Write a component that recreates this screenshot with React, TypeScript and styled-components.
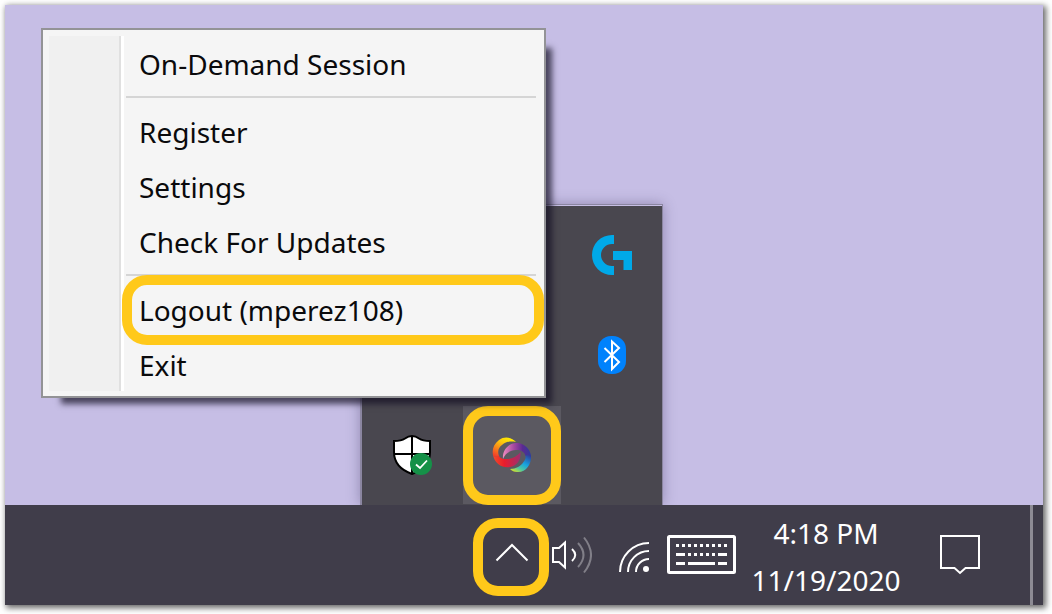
import React from "react";
import styled, { createGlobalStyle, css } from "styled-components";

const GlobalStyle = createGlobalStyle`
  *, *::before, *::after { box-sizing: border-box; }
  body {
    margin: 0;
    background: #fff;
    font-family: "Noto Sans", "Open Sans", "Segoe UI", sans-serif;
  }
  button { font: inherit; color: inherit; background: none; border: 0; padding: 0; }
  ul { list-style: none; margin: 0; padding: 0; }
`;

const ring = css`
  content: "";
  position: absolute;
  border: 10px solid #ffc91a;
  pointer-events: none;
`;

const Page = styled.main`
  display: flex;
  min-height: 100vh;
  padding: 5px 9px 9px 5px;
`;

const Desktop = styled.div`
  flex: 1;
  display: flex;
  flex-direction: column;
  min-width: 0;
  background: #c6bee5;
  box-shadow: 2px 2px 6px 1px rgba(0, 0, 0, 0.6);
`;

const Wallpaper = styled.section`
  position: relative;
  flex: 1;
  min-height: 480px;
`;

const TrayPanel = styled.div`
  position: absolute;
  right: 380px;
  bottom: 0;
  display: grid;
  grid-template-columns: repeat(3, 100px);
  grid-auto-rows: 100px;
  background: #49474f;
  border: solid #8b86a1;
  border-width: 1px 1px 0 2px;
  box-shadow: 0 0 12px rgba(50, 40, 80, 0.35), inset 0 1px 0 #c6bee5;
  clip-path: inset(-20px -20px 0 -20px);
`;

const TrayCell = styled.button<{ $active?: boolean }>`
  position: relative;
  display: flex;
  align-items: center;
  justify-content: center;

  ${(p) =>
    p.$active &&
    css`
      margin: 1px;
      background: #5b5961;
      &::after {
        ${ring}
        inset: 0 0 -1px;
        border-radius: 25px;
      }
    `}
`;

const Menu = styled.div`
  position: absolute;
  right: 497px;
  bottom: 107px;
  width: 505px;
  display: flex;
  padding: 0 0 0 6px;
  background: #f5f5f5;
  border: 2px solid #939396;
  box-shadow: 13px 13px 6px -7px rgba(20, 15, 35, 0.7);
`;

const Gutter = styled.div`
  width: 75px;
  margin: 6px 0 5px;
  background: #f0f0f0;
  border-right: 3px solid #fff;
  box-shadow: inset -2px 0 0 #e0e0e0;
`;

const MenuList = styled.ul`
  flex: 1;
  padding: 6px 0 4px 2px;
`;

const MenuRow = styled.li`
  position: relative;
`;

const MenuItem = styled.button<{ $marked?: boolean }>`
  display: block;
  width: 100%;
  height: 55px;
  padding: 0 13px;
  text-align: left;
  font-size: 28px;
  line-height: 56px;
  color: #0a0a0c;
  white-space: nowrap;

  ${(p) =>
    p.$marked &&
    css`
      &::after {
        ${ring}
        inset: -7px 0 -8px -4px;
        border-radius: 25px;
      }
    `}
`;

const Separator = styled.li`
  height: 2px;
  margin: 5px 8px 6px 0;
  background: #d5d5d5;
`;

const Taskbar = styled.footer`
  display: flex;
  justify-content: flex-end;
  height: 100px;
  background: #403d4a;
  color: #fff;
`;

const TaskButton = styled.button<{ $width: number }>`
  position: relative;
  display: flex;
  align-items: center;
  justify-content: center;
  width: ${(p) => p.$width}px;
`;

const ChevronButton = styled(TaskButton)`
  &::after {
    ${ring}
    inset: 13px 0 9px;
    border-radius: 25px;
  }
`;

const Clock = styled(TaskButton)`
  flex-direction: column;
  padding-top: 3px;
  font-size: 28px;
  line-height: 47px;
`;

const ShowDesktop = styled.button`
  width: 13px;
  margin-left: 24px;
  border-left: 3px solid #8d8b94;
`;

const LogitechIcon = () => (
  <svg width="40" height="40" viewBox="0 0 40 40" fill="#00a9e8">
    <path d="M22 0H20A20 20 0 0 0 20 40H22V31H20A11 11 0 0 1 20 9H22Z" />
    <path d="M21 16H40V35H31.500V25H21Z" />
  </svg>
);

const BluetoothIcon = () => (
  <svg width="28" height="38" viewBox="0 0 28 38">
    <rect width="28" height="38" rx="13" fill="#0082fc" />
    <path d="M6.500 12L21 26L14 33V5.500L21 12L6.500 26" fill="none" stroke="#fff" strokeWidth="2" />
  </svg>
);

const ShieldIcon = () => (
  <svg width="40" height="40" viewBox="0 0 40 40">
    <path
      d="M20 1C17 1 15 2 13 3.500C10 5.500 6 6 2 6V17C2 28 9 35 20 39C31 35 38 28 38 17V6C34 6 30 5.500 27 3.500C25 2 23 1 20 1Z"
      fill="#fff"
      stroke="#000"
      strokeWidth="2"
    />
    <path d="M20 1V39M2 19H38" stroke="#000" strokeWidth="2" />
    <circle cx="29" cy="29" r="11" fill="#159148" />
    <path d="M24 29.500L28 33L35 25.500" fill="none" stroke="#fff" strokeWidth="1.800" />
  </svg>
);

const SwirlIcon = () => (
  <svg width="40" height="40" viewBox="0 0 40 40">
    <defs>
      <linearGradient id="warm" x1="0.800" y1="0" x2="0.200" y2="1">
        <stop offset="0" stopColor="#fff200" />
        <stop offset="0.350" stopColor="#fdc70c" />
        <stop offset="1" stopColor="#f0402a" />
      </linearGradient>
      <linearGradient id="red" x1="0" x2="1" y1="0" y2="0">
        <stop offset="0" stopColor="#f04a28" />
        <stop offset="0.400" stopColor="#ea1c2c" />
        <stop offset="1" stopColor="#9c2f72" />
      </linearGradient>
      <linearGradient id="violet" x1="0" x2="1" y1="0" y2="0">
        <stop offset="0" stopColor="#f08cc0" />
        <stop offset="0.400" stopColor="#a3479f" />
        <stop offset="0.700" stopColor="#5b2a91" />
        <stop offset="1" stopColor="#2f3c9c" />
      </linearGradient>
      <linearGradient id="cool" x1="0.900" y1="0" x2="0.200" y2="1">
        <stop offset="0" stopColor="#2f3c9c" />
        <stop offset="0.450" stopColor="#16a3e0" />
        <stop offset="0.750" stopColor="#4fc9a0" />
        <stop offset="1" stopColor="#d4e02a" />
      </linearGradient>
    </defs>
    <path d="M24 7C20 2 12 1 7 5C1 9.500 -0.500 16 1.500 22L7 21C5 16 7 12 10 10C14 6.500 19 6 24 7Z" fill="url(#warm)" />
    <path d="M1.500 22C4 30 12 34 20 31.500C26 29.500 29 24 28.500 17C26 20.500 21 23.500 16 24C11.500 24.500 8 23.500 6.700 20.500Z" fill="url(#red)" />
    <path d="M11 24C10 14 18 7 26 8C33 9 38 14 39 20.500L33.500 21C32.500 17 29 14.500 24 15C18 15.500 13.500 18 11 24Z" fill="url(#violet)" />
    <path d="M39 20C40 30 33 38 25 37C22 37 20 36 18 34C24 34 29 31 31.500 27C33.500 24.500 34 23 33.300 20.500Z" fill="url(#cool)" />
  </svg>
);

const ChevronIcon = () => (
  <svg width="40" height="40" viewBox="0 0 40 40" fill="none" stroke="#fff" strokeWidth="2">
    <path d="M5.500 25.500L21 10L36.500 25.500" />
  </svg>
);

const VolumeIcon = () => (
  <svg width="40" height="40" viewBox="0 0 40 40" fill="none" stroke="#fff" strokeWidth="2">
    <path d="M1 13H7L13 7.500V32.500L7 27H1Z" />
    <path d="M20 14Q26.500 20 20 26" />
    <path d="M26 8Q37 20 26 32" stroke="#817f88" />
    <path d="M32 2.500Q46 20 32 37.500" stroke="#817f88" />
  </svg>
);

const WifiIcon = () => (
  <svg width="40" height="40" viewBox="0 0 40 40" fill="none" stroke="#fff" strokeWidth="2">
    <path d="M10 37A29 29 0 0 1 39 8" />
    <path d="M18 37A21 21 0 0 1 39 16" />
    <path d="M26 37A13 13 0 0 1 39 24" />
    <circle cx="36" cy="34" r="3" fill="#fff" stroke="none" />
  </svg>
);

const topKeys = [9, 15, 21, 27, 33, 39, 45, 51, 57];
const middleKeys = [21, 27, 33, 39, 45];

const KeyboardIcon = () => (
  <svg width="69" height="40" viewBox="0 0 69 40" fill="#fff">
    <rect x="1.500" y="1.500" width="66" height="36" rx="1" fill="none" stroke="#fff" strokeWidth="3" />
    {topKeys.map((x) => (
      <rect key={x} x={x} y="9" width="3" height="3" />
    ))}
    {middleKeys.map((x) => (
      <rect key={x} x={x} y="18" width="3" height="3" />
    ))}
    <path d="M9 18h9v3h-9zM51 18h9v3h-9zM9 27h9v3h-9zM21 27h27v3h-27zM51 27h9v3h-9z" />
  </svg>
);

const NotificationIcon = () => (
  <svg width="40" height="40" viewBox="0 0 40 40" fill="none" stroke="#fff" strokeWidth="2">
    <path d="M1 1H39V33H25.500L20 38L14.500 33H1Z" />
  </svg>
);

export default function App() {
  return (
    <>
      <GlobalStyle />
      <Page>
        <Desktop>
          <Wallpaper>
            <TrayPanel>
              <span />
              <span />
              <TrayCell aria-label="Logitech G HUB">
                <LogitechIcon />
              </TrayCell>
              <span />
              <span />
              <TrayCell aria-label="Bluetooth">
                <BluetoothIcon />
              </TrayCell>
              <TrayCell aria-label="Windows Security">
                <ShieldIcon />
              </TrayCell>
              <TrayCell $active aria-label="Recorder">
                <SwirlIcon />
              </TrayCell>
              <span />
            </TrayPanel>
            <Menu>
              <Gutter />
              <MenuList>
                <MenuRow><MenuItem>On-Demand Session</MenuItem></MenuRow>
                <Separator role="separator" />
                <MenuRow><MenuItem>Register</MenuItem></MenuRow>
                <MenuRow><MenuItem>Settings</MenuItem></MenuRow>
                <MenuRow><MenuItem>Check For Updates</MenuItem></MenuRow>
                <Separator role="separator" />
                <MenuRow><MenuItem $marked>Logout (mperez108)</MenuItem></MenuRow>
                <MenuRow><MenuItem>Exit</MenuItem></MenuRow>
              </MenuList>
            </Menu>
          </Wallpaper>
          <Taskbar>
            <ChevronButton $width={76} aria-label="Show hidden icons">
              <ChevronIcon />
            </ChevronButton>
            <TaskButton $width={46} aria-label="Volume">
              <VolumeIcon />
            </TaskButton>
            <TaskButton $width={70} aria-label="Network">
              <WifiIcon />
            </TaskButton>
            <TaskButton $width={73} aria-label="Touch keyboard">
              <KeyboardIcon />
            </TaskButton>
            <Clock $width={176}>
              <span>4:18 PM</span>
              <span>11/19/2020</span>
            </Clock>
            <TaskButton $width={92} aria-label="Notifications">
              <NotificationIcon />
            </TaskButton>
            <ShowDesktop aria-label="Show desktop" />
          </Taskbar>
        </Desktop>
      </Page>
    </>
  );
}
